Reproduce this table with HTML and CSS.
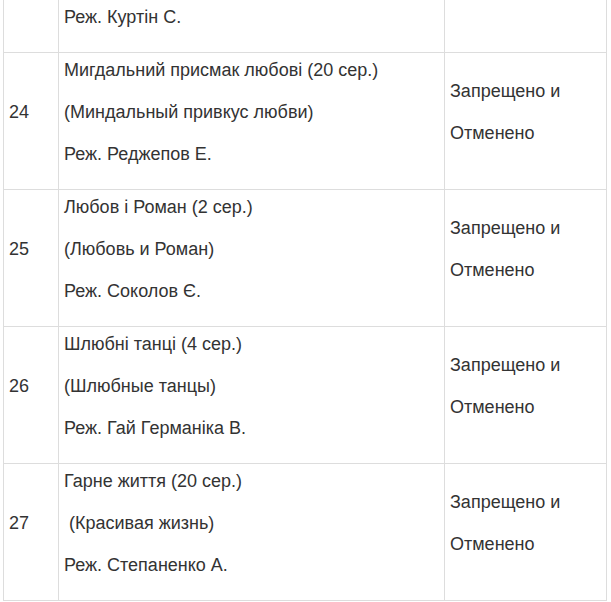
FILE: index.html
```html
<!DOCTYPE html>
<html lang="uk">
<head>
<meta charset="utf-8">
<title>Таблиця</title>
<link rel="stylesheet" href="styles.css">
</head>
<body>
<table class="list">
  <colgroup>
    <col class="c-num">
    <col class="c-title">
    <col class="c-status">
  </colgroup>
  <tbody>
    <tr class="first">
      <td class="num"></td>
      <td class="title"><p>Реж. Куртін С.</p></td>
      <td class="status"></td>
    </tr>
    <tr>
      <td class="num"><p>24</p></td>
      <td class="title"><p>Мигдальний присмак любові (20 сер.)</p><p>(Миндальный привкус любви)</p><p>Реж. Реджепов Е.</p></td>
      <td class="status"><p>Запрещено и</p><p>Отменено</p></td>
    </tr>
    <tr>
      <td class="num"><p>25</p></td>
      <td class="title"><p>Любов і Роман (2 сер.)</p><p>(Любовь и Роман)</p><p>Реж. Соколов Є.</p></td>
      <td class="status"><p>Запрещено и</p><p>Отменено</p></td>
    </tr>
    <tr>
      <td class="num"><p>26</p></td>
      <td class="title"><p>Шлюбні танці (4 сер.)</p><p>(Шлюбные танцы)</p><p>Реж. Гай Германіка В.</p></td>
      <td class="status"><p>Запрещено и</p><p>Отменено</p></td>
    </tr>
    <tr>
      <td class="num"><p>27</p></td>
      <td class="title"><p>Гарне життя (20 сер.)</p><p>&nbsp;(Красивая жизнь)</p><p>Реж. Степаненко А.</p></td>
      <td class="status"><p>Запрещено и</p><p>Отменено</p></td>
    </tr>
  </tbody>
</table>
</body>
</html>
```

FILE: styles.css
```css
html, body {
  margin: 0;
  padding: 0;
  background: #fff;
}
body {
  font-family: "Liberation Sans", Arial, sans-serif;
  font-size: 18px;
  color: #333;
  padding: 0 0 0 3px;
}
.list {
  border-collapse: collapse;
  table-layout: fixed;
  width: 603px;
  margin-top: -1px;
}
.c-num { width: 55px; }
.c-title { width: 386px; }
.c-status { width: 162px; }
.list td {
  border: 1px solid #ddd;
  padding: 4px 5px 6px;
  vertical-align: middle;
  text-align: left;
}
.list tr.first td {
  border-top: 0;
  padding-top: 5px;
  padding-bottom: 6px;
}
.list p {
  margin: 0 0 16px;
  line-height: 26px;
  white-space: nowrap;
}
```
